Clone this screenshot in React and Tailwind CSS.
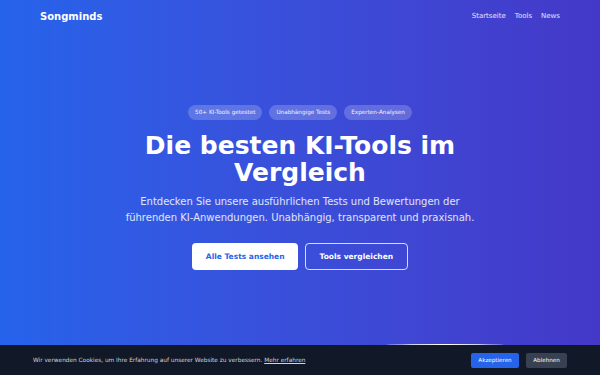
export default function App() {
  return (
    <div className="relative h-[375px] w-full overflow-hidden bg-gradient-to-r from-[#2563eb] to-[#4438c8] font-['DejaVu_Sans',sans-serif] text-white">
      {/* Nav */}
      <nav className="flex h-8 items-center justify-between px-10">
        <span className="text-[10px] font-bold">Songminds</span>
        <div className="flex gap-[9px] text-[7px] text-white/85">
          <span>Startseite</span>
          <span>Tools</span>
          <span>News</span>
        </div>
      </nav>

      {/* Hero */}
      <main className="flex flex-col items-center pt-[73px] text-center">
        <div className="flex gap-[7px] text-[5.7px] text-white/90">
          <span className="flex h-[15px] items-center rounded-full bg-white/20 px-[7px]">50+ KI-Tools getestet</span>
          <span className="flex h-[15px] items-center rounded-full bg-white/20 px-[7px]">Unabhängige Tests</span>
          <span className="flex h-[15px] items-center rounded-full bg-white/20 px-[7px]">Experten-Analysen</span>
        </div>
        <h1 className="mt-[12px] text-[25px] font-bold leading-[27px]">
          Die besten KI-Tools im
          <br />
          Vergleich
        </h1>
        <p className="mt-[8px] text-[10px] leading-[16px] text-white/85">
          Entdecken Sie unsere ausführlichen Tests und Bewertungen der
          <br />
          führenden KI-Anwendungen. Unabhängig, transparent und praxisnah.
        </p>
        <div className="mt-[17px] flex gap-[7px]">
          <button className="h-[27px] rounded-[4px] bg-white px-[13.5px] text-[7.5px] font-bold text-[#2563eb]">
            Alle Tests ansehen
          </button>
          <button className="h-[27px] rounded-[4px] border border-white/80 px-[13.5px] text-[7.5px] font-bold text-white">
            Tools vergleichen
          </button>
        </div>
      </main>

      {/* Wave */}
      <svg className="absolute bottom-0 left-0 h-[40px] w-full" viewBox="0 0 600 40" preserveAspectRatio="none">
        <ellipse cx="445" cy="13" rx="88" ry="4" fill="white" />
      </svg>

      {/* Cookie banner */}
      <div className="absolute bottom-0 left-0 flex h-[30px] w-full items-center justify-between bg-[#111827] pl-[33px] pr-[33px]">
        <p className="text-[5.8px] text-gray-300">
          Wir verwenden Cookies, um Ihre Erfahrung auf unserer Website zu verbessern.{' '}
          <span className="underline">Mehr erfahren</span>
        </p>
        <div className="flex gap-[7px]">
          <button className="h-[15px] w-[48px] rounded-[2px] bg-[#2563eb] text-[5.6px] text-white">Akzeptieren</button>
          <button className="h-[15px] w-[41px] rounded-[2px] bg-[#374151] text-[5.6px] text-white">Ablehnen</button>
        </div>
      </div>
    </div>
  );
}
